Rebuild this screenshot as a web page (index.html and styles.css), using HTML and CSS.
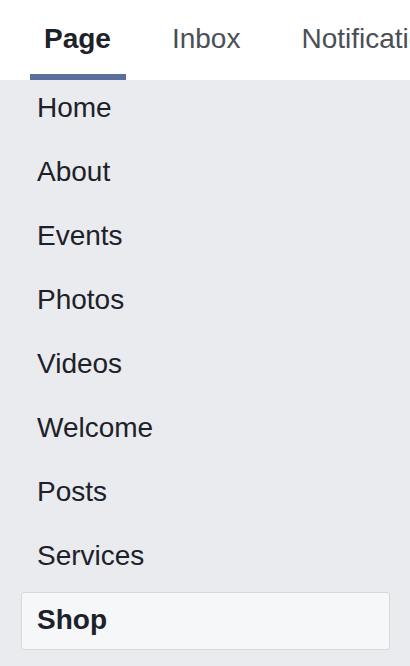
FILE: index.html
```html
<!DOCTYPE html>
<html lang="en">
<head>
  <meta charset="UTF-8" />
  <meta name="viewport" content="width=device-width, initial-scale=1.0"/>
  <title>Page menu</title>
  <link rel="stylesheet" href="styles.css">
</head>
<body>
  <nav class="tabs">
    <a class="tab active">Page</a>
    <a class="tab">Inbox</a>
    <a class="tab">Notifications</a>
  </nav>

  <ul class="menu">
    <li>Home</li>
    <li>About</li>
    <li>Events</li>
    <li>Photos</li>
    <li>Videos</li>
    <li>Welcome</li>
    <li>Posts</li>
    <li>Services</li>
    <li class="selected">Shop</li>
  </ul>
</body>
</html>
```

FILE: styles.css
```css
*, *::before, *::after { box-sizing: border-box; }
* {
  margin: 0;
  padding: 0;
  font-family: "Liberation Sans", Arial, sans-serif;
}

body {
  background-color: #e9ebee;
  height: 666px;
  overflow: hidden;
}

.tabs {
  display: flex;
  gap: 32px;
  height: 80px;
  padding-left: 30px;
  background-color: white;
  white-space: nowrap;
  overflow: hidden;
}

.tab {
  display: flex;
  align-items: center;
  padding: 4px 15px 0 14px;
  font-size: 28px;
  color: #4b4f56;
  border-bottom: 6px solid transparent;
}

.tab.active {
  font-weight: bold;
  color: #1d2129;
  border-bottom-color: #5b6f9d;
}

.menu {
  list-style: none;
  padding: 0 20px 0 21px;
}

.menu li {
  display: flex;
  align-items: center;
  height: 58px;
  margin-bottom: 6px;
  padding: 0 0 2px 15px;
  font-size: 28px;
  color: #1d2129;
  border: 1px solid transparent;
  border-radius: 3px;
}

.menu li.selected {
  font-weight: bold;
  background-color: #f6f7f9;
  border-color: #d6d8dc;
}
```
